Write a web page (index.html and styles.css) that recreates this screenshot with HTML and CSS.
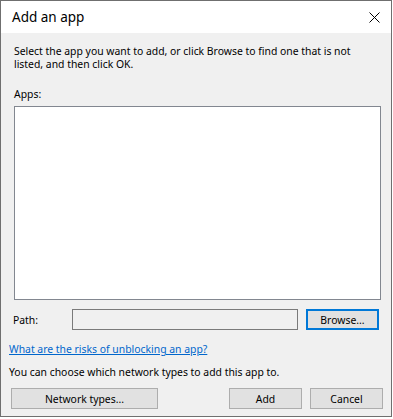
FILE: index.html
```html
<!DOCTYPE html>
<html lang="en">
<head>
  <meta charset="UTF-8">
  <title>Add an app</title>
  <link rel="stylesheet" href="styles.css">
</head>
<body>

  <div class="window">
    <div class="titlebar">
      <span class="title">Add an app</span>
      <svg class="close" width="11" height="11" viewBox="0 0 11 11">
        <path d="M0.5 0.5 L10.5 10.5 M10.5 0.5 L0.5 10.5" stroke="#000" stroke-width="1" fill="none"/>
      </svg>
    </div>

    <div class="content">
      <p class="intro">Select the app you want to add, or click Browse to find one that is not<br>listed, and then click OK.</p>

      <div class="label">Apps:</div>
      <div class="listbox"></div>

      <div class="path-row">
        <span class="path-label">Path:</span>
        <div class="path-input"></div>
        <button class="btn btn-default">Browse...</button>
      </div>

      <a class="link" href="#">What are the risks of unblocking an app?</a>
      <p class="note">You can choose which network types to add this app to.</p>

      <div class="buttons">
        <button class="btn btn-wide">Network types...</button>
        <span class="spacer"></span>
        <button class="btn">Add</button>
        <button class="btn">Cancel</button>
      </div>
    </div>
  </div>

</body>
</html>
```

FILE: styles.css
```css
body {
  margin: 0;
  background: #fff;
  font-family: 'Noto Sans', 'Open Sans', sans-serif;
  font-size: 10.4px;
  color: #000;
}

.window {
  width: 390px;
  height: 415px;
  border: 1px solid #6f6f6f;
  background: #f0f0f0;
  display: flex;
  flex-direction: column;
}

.titlebar {
  height: 32px;
  background: #fff;
  display: flex;
  align-items: center;
  padding: 0 10px 0 11px;
}

.title {
  flex: 1;
  font-size: 13.5px;
  padding-bottom: 1px;
}

.close {
  margin-right: 1px;
}

.content {
  display: flex;
  flex-direction: column;
  padding: 12px 10px 0 8px;
}

.intro {
  margin: 0 0 0 5px;
  line-height: 13px;
  white-space: nowrap;
}

.label {
  margin: 17px 0 0 5px;
  line-height: 13px;
}

.listbox {
  margin: 5px 0 0 5px;
  height: 192px;
  background: #fff;
  border: 1px solid #828790;
}

.path-row {
  display: flex;
  align-items: center;
  margin-top: 9px;
}

.path-label {
  box-sizing: border-box;
  width: 63px;
  padding-left: 4px;
}

.path-input {
  width: 224px;
  height: 19px;
  border: 1px solid #7a7a7a;
  background: #f0f0f0;
}

.btn {
  font-family: inherit;
  font-size: 10.4px;
  color: #000;
  background: #e1e1e1;
  border: 1px solid #adadad;
  height: 21px;
  width: 73px;
  padding: 0;
  margin: 0;
}

.btn-default {
  margin-left: 8px;
  border: 2px solid #0078d7;
  height: 21px;
}

.link {
  margin-top: 13px;
  color: #0066cc;
  line-height: 13px;
  align-self: flex-start;
}

.note {
  margin: 10px 0 0;
  line-height: 13px;
}

.buttons {
  display: flex;
  margin: 9px -2px 0 0;
  gap: 8px;
  padding-left: 2px;
}

.btn-wide {
  width: 147px;
}

.spacer {
  flex: 1;
}
```
